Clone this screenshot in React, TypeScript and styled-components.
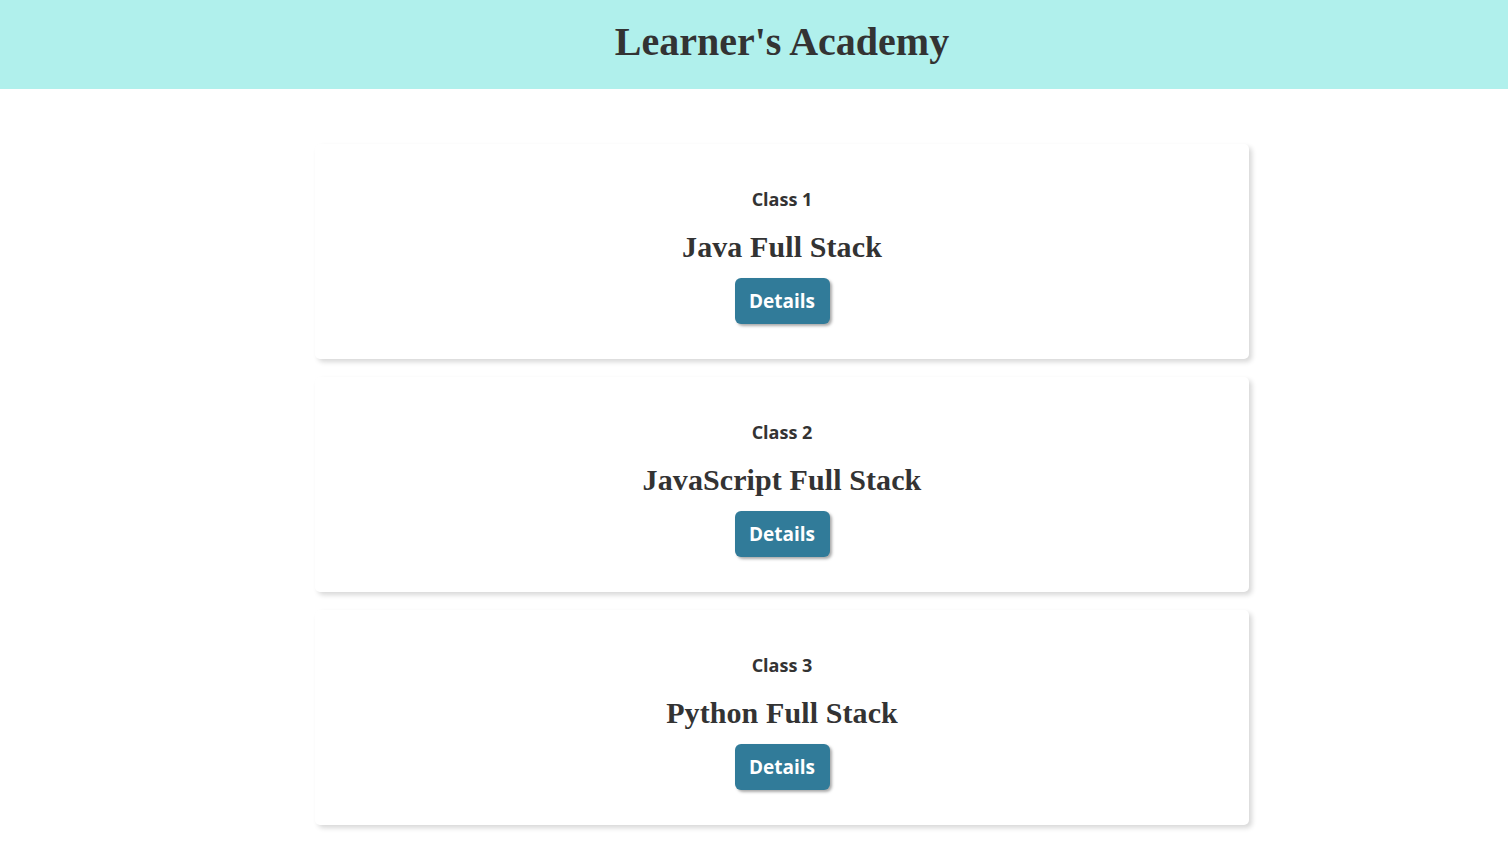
import React from "react";
import styled, { createGlobalStyle } from "styled-components";

const classes = [
  { id: 1, name: "Java Full Stack" },
  { id: 2, name: "JavaScript Full Stack" },
  { id: 3, name: "Python Full Stack" },
];

const GlobalStyle = createGlobalStyle`
  body {
    margin: 0;
    background: #ffffff;
    color: #333333;
  }
`;

const Page = styled.div`
  padding-left: 56px;
`;

const Header = styled.header`
  height: 89px;
  box-sizing: border-box;
  margin-left: -56px;
  padding: 0 0 6px 56px;
  background-color: #b0f0ec;
  display: flex;
  align-items: center;
  justify-content: center;
`;

const Title = styled.h1`
  margin: 0;
  font-family: "Liberation Serif", "Times New Roman", serif;
  font-size: 40px;
  font-weight: 700;
  color: #333333;
`;

const List = styled.main`
  display: flex;
  flex-direction: column;
  align-items: center;
  gap: 18px;
  padding: 55px 0 20px;
`;

const Card = styled.section`
  width: 934px;
  height: 215px;
  box-sizing: border-box;
  border-radius: 5px;
  background: #ffffff;
  box-shadow: 3px 3px 5px #d8d8d8;
  display: flex;
  flex-direction: column;
  align-items: center;
  padding-top: 42px;
`;

const ClassLabel = styled.h3`
  margin: 0;
  font-family: "Open Sans", "Noto Sans", sans-serif;
  font-size: 18px;
  font-weight: 700;
  color: #333333;
  line-height: 26px;
`;

const ClassName = styled.h2`
  margin: 15px 0 0;
  font-family: "Liberation Serif", "Times New Roman", serif;
  font-size: 30px;
  font-weight: 700;
  color: #333333;
  line-height: 40px;
  letter-spacing: 0.1px;
`;

const DetailsButton = styled.button`
  margin-top: 11px;
  width: 95px;
  height: 46px;
  border: none;
  border-radius: 6px;
  background-color: #317b99;
  color: #ffffff;
  font-family: "Open Sans", "Noto Sans", sans-serif;
  font-size: 19px;
  font-weight: 700;
  box-shadow: 2px 2px 3px #aaaaaa;
  cursor: pointer;
`;

export default function App() {
  return (
    <Page>
      <GlobalStyle />
      <Header>
        <Title>Learner's Academy</Title>
      </Header>
      <List>
        {classes.map((c) => (
          <Card key={c.id}>
            <ClassLabel>Class {c.id}</ClassLabel>
            <ClassName>{c.name}</ClassName>
            <DetailsButton>Details</DetailsButton>
          </Card>
        ))}
      </List>
    </Page>
  );
}
